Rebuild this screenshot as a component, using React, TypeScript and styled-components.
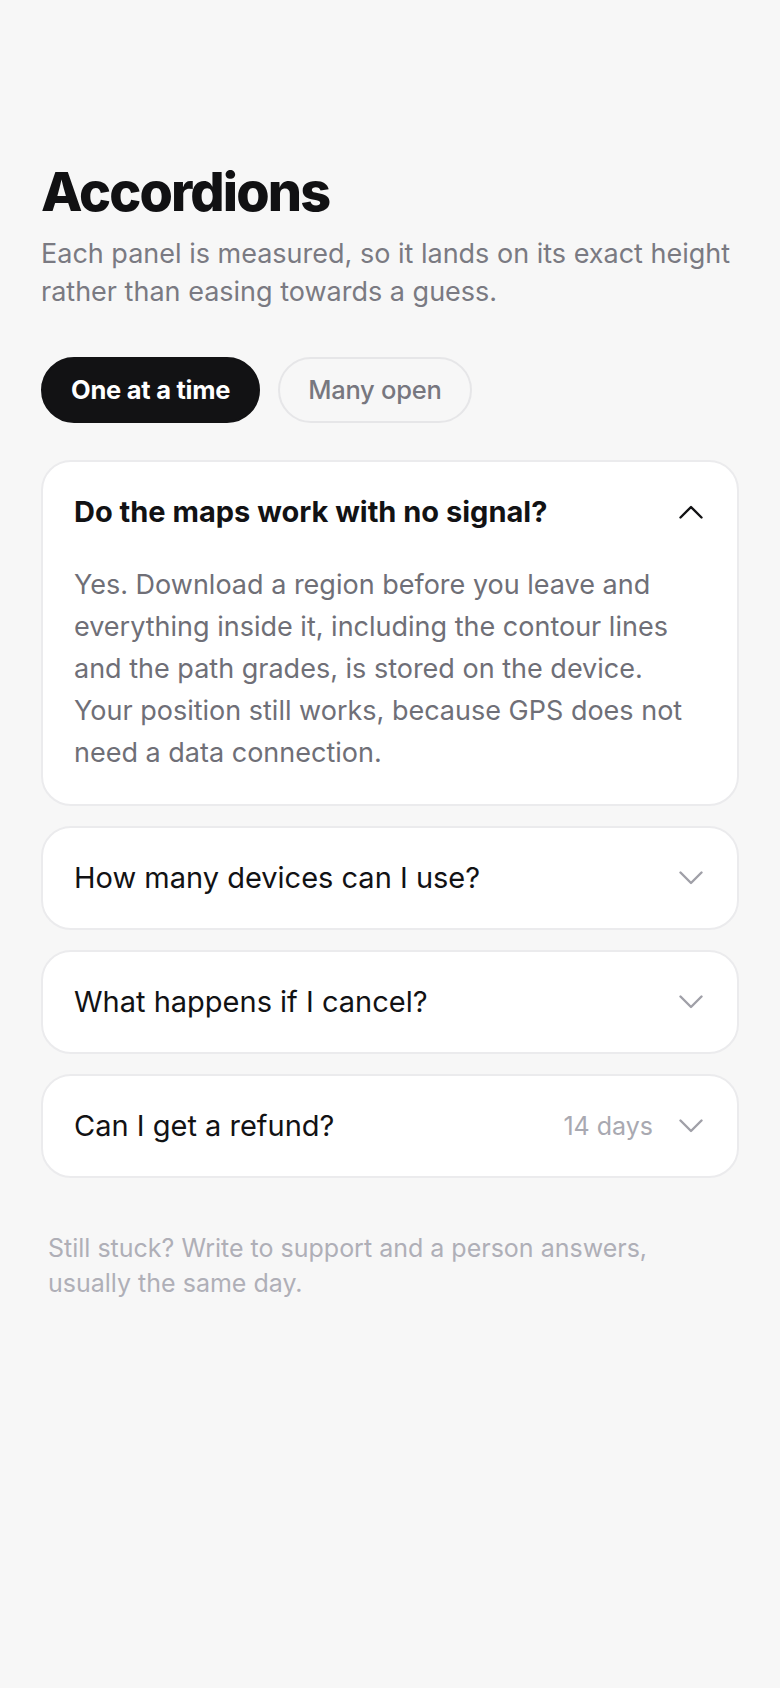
import React, { FC, useState } from 'react';
import styled, { createGlobalStyle } from 'styled-components';

const GlobalStyle = createGlobalStyle`
  body {
    margin: 0;
    background: #f7f7f7;
    font-family: Inter, "Noto Sans", "Liberation Sans", sans-serif;
    -webkit-font-smoothing: antialiased;
  }
`;

type Item = { q: string; a?: string; meta?: string };

const items: Item[] = [
  {
    q: 'Do the maps work with no signal?',
    a: 'Yes. Download a region before you leave and everything inside it, including the contour lines and the path grades, is stored on the device. Your position still works, because GPS does not need a data connection.',
  },
  { q: 'How many devices can I use?', a: 'Up to five, signed in with the same account.' },
  { q: 'What happens if I cancel?', a: 'Your downloaded regions stay until the end of the billing period.' },
  { q: 'Can I get a refund?', a: 'Yes, within 14 days of purchase.', meta: '14 days' },
];

const Chevron: FC<{ up?: boolean }> = ({ up }) => (
  <ChevronSvg width="24" height="14" viewBox="0 0 24 14" $up={up}>
    <path d="M1.5 1.5 L12 12 L22.5 1.5" fill="none" stroke="currentColor" strokeWidth="2.4" strokeLinecap="round" strokeLinejoin="round" />
  </ChevronSvg>
);

const App: FC = () => {
  const [many, setMany] = useState(false);
  const [open, setOpen] = useState<number[]>([0]);

  const toggle = (i: number) => {
    if (open.includes(i)) setOpen(open.filter((x) => x !== i));
    else setOpen(many ? [...open, i] : [i]);
  };

  return (
    <Page>
      <GlobalStyle />
      <Title>Accordions</Title>
      <Lead>Each panel is measured, so it lands on its exact height rather than easing towards a guess.</Lead>
      <Modes>
        <Mode $active={!many} onClick={() => { setMany(false); setOpen(open.slice(0, 1)); }}>One at a time</Mode>
        <Mode $active={many} onClick={() => setMany(true)}>Many open</Mode>
      </Modes>
      <List>
        {items.map((it, i) => {
          const isOpen = open.includes(i);
          return (
            <Card key={it.q}>
              <Header onClick={() => toggle(i)}>
                <Question $open={isOpen}>{it.q}</Question>
                {it.meta && <Meta>{it.meta}</Meta>}
                <ChevronWrap $open={isOpen}>
                  <Chevron up={isOpen} />
                </ChevronWrap>
              </Header>
              {isOpen && <Answer>{it.a}</Answer>}
            </Card>
          );
        })}
      </List>
      <Footnote>Still stuck? Write to support and a person answers, usually the same day.</Footnote>
    </Page>
  );
};
export default App;

const Page = styled.div`
  padding: 162px 41px 80px;
`;

const Title = styled.h1`
  margin: 0;
  font-size: 54px;
  line-height: 1.1;
  font-weight: 800;
  letter-spacing: -0.035em;
  color: #111113;
`;

const Lead = styled.p`
  margin: 14px 0 0;
  font-size: 27px;
  line-height: 37.7px;
  color: #7a7a82;
`;

const Modes = styled.div`
  display: flex;
  gap: 18px;
  margin-top: 46px;
`;

const Mode = styled.button<{ $active?: boolean }>`
  height: 66px;
  padding: 0 28px;
  border-radius: 33px;
  border: 2px solid ${(p) => (p.$active ? '#121214' : '#e6e6e8')};
  background: ${(p) => (p.$active ? '#121214' : 'transparent')};
  color: ${(p) => (p.$active ? '#ffffff' : '#77777f')};
  font-family: inherit;
  font-size: 25.5px;
  font-weight: ${(p) => (p.$active ? 700 : 500)};
  letter-spacing: -0.01em;
  cursor: pointer;
`;

const List = styled.div`
  display: flex;
  flex-direction: column;
  gap: 20px;
  margin-top: 37px;
`;

const Card = styled.div`
  background: #ffffff;
  border: 2px solid #ebebed;
  border-radius: 30px;
  overflow: hidden;
`;

const Header = styled.div`
  display: flex;
  align-items: center;
  min-height: 100px;
  padding: 0 34px 0 31px;
  cursor: pointer;
`;

const Question = styled.div<{ $open?: boolean }>`
  flex: 1;
  font-size: 29px;
  line-height: 38px;
  font-weight: ${(p) => (p.$open ? 700 : 400)};
  color: #121214;
`;

const Meta = styled.span`
  font-size: 25px;
  color: #a9a9b1;
  margin-right: 26px;
`;

const ChevronWrap = styled.span<{ $open?: boolean }>`
  display: flex;
  color: ${(p) => (p.$open ? '#121214' : '#a0a0a8')};
`;

const ChevronSvg = styled.svg<{ $up?: boolean }>`
  transform: ${(p) => (p.$up ? 'rotate(180deg)' : 'none')};
`;

const Answer = styled.p`
  margin: 0;
  padding: 2px 40px 30px 31px;
  font-size: 27px;
  line-height: 42px;
  color: #6f6f77;
`;

const Footnote = styled.p`
  margin: 53px 0 0;
  padding: 0 7px;
  font-size: 25px;
  line-height: 35px;
  color: #afafb7;
`;
